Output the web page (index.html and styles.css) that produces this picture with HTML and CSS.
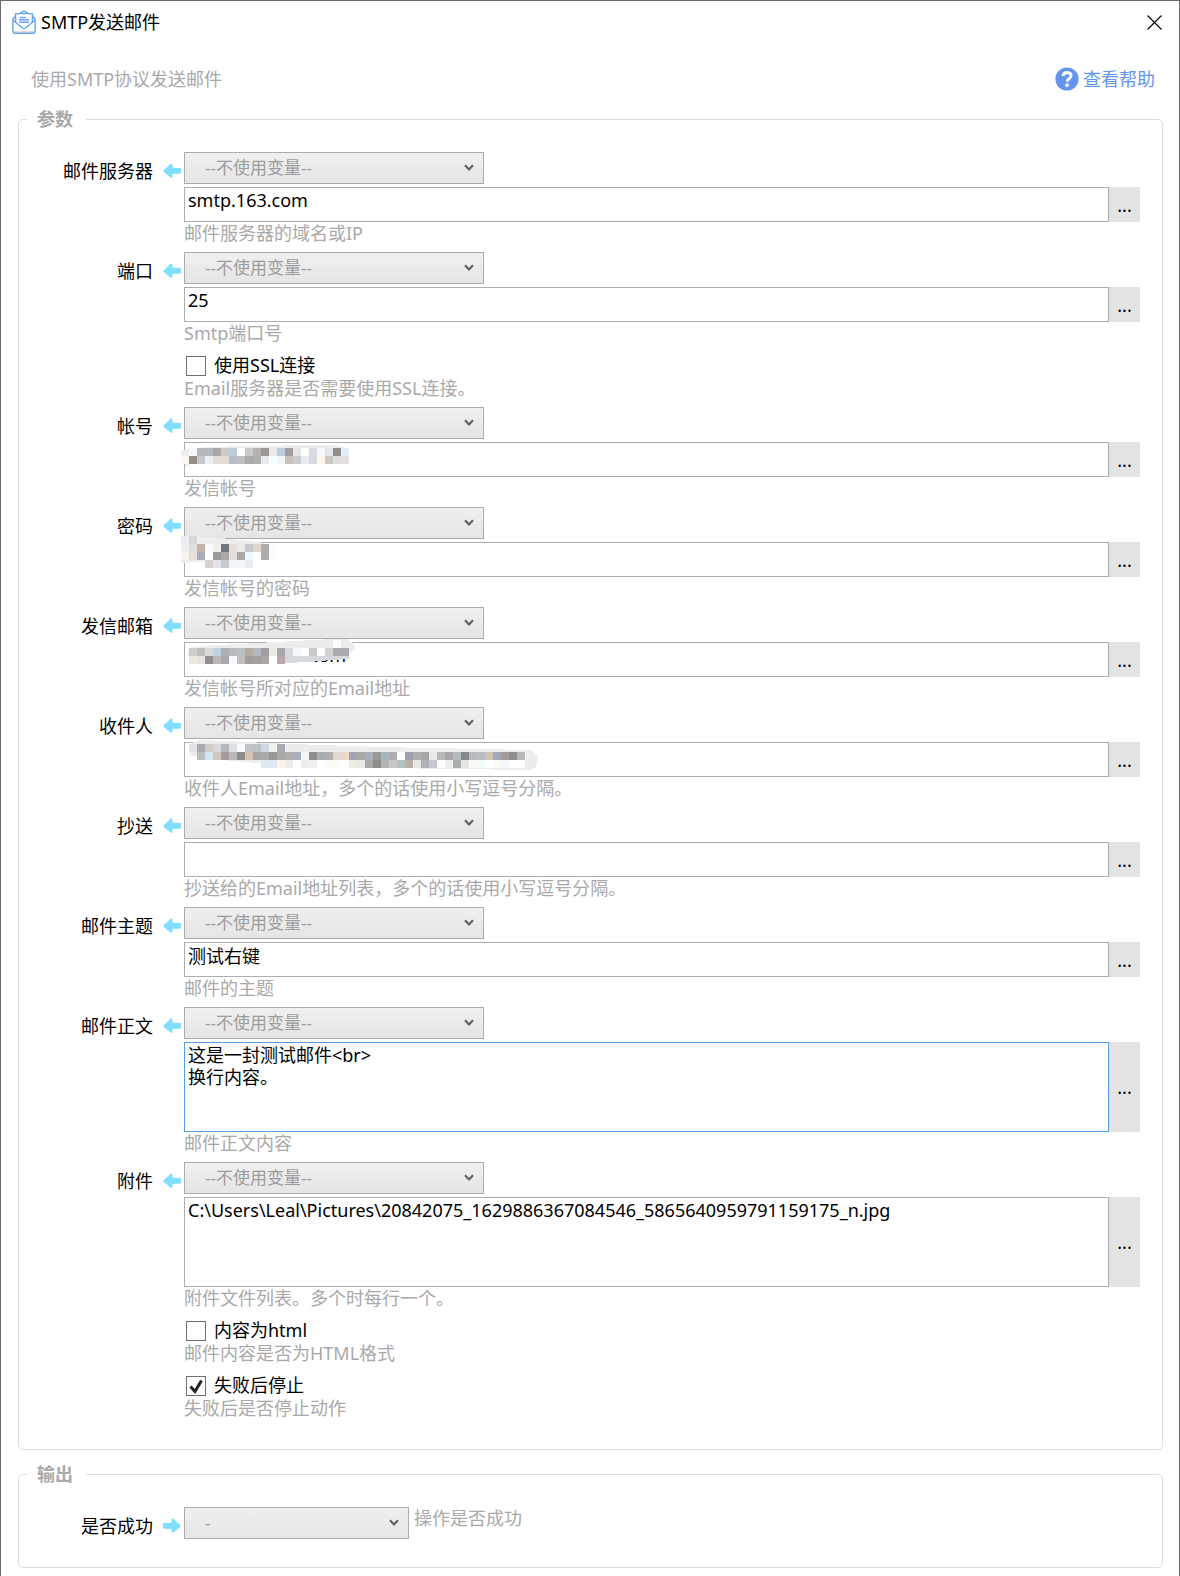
FILE: index.html
```html
<!DOCTYPE html>
<html lang="zh-CN">
<head>
    <meta charset="UTF-8">
    <meta name="viewport" content="width=device-width, initial-scale=1.0">
    <title>SMTP发送邮件</title>
    <link rel="stylesheet" href="styles.css">
</head>
<body>
    <svg class="symbols" aria-hidden="true">
        <symbol id="arrow-left" viewBox="0 0 18 16">
            <path d="M0.5 7.6 L7.6 0.8 Q9.4 0 9.4 1.6 V4.6 Q13 5.2 16.6 4.8 Q18 4.8 18 6.2 V9.6 Q18 11 16.6 10.8 Q13 10.4 9.4 11 V14 Q9.2 15.8 7.4 14.6 L0.5 8.8 Q-0.1 8.2 0.5 7.6 Z" fill="#80deff"/>
        </symbol>
    </svg>

    <div class="window">
        <header class="title-bar">
            <svg class="app-icon" viewBox="0 0 24 24" fill="none" stroke="#67a6ea" stroke-width="1.4" stroke-linejoin="round">
                <path d="M3.5 6.2 L0.9 9 V21.5 Q0.9 23.2 2.6 23.2 H21.4 Q23.1 23.2 23.1 21.5 V9 L20.5 6.2"/>
                <path d="M3.6 12.5 V3.6 H20.4 V12.5"/>
                <path d="M8 3.4 L12 0.9 L16 3.4"/>
                <path d="M1 10 L9.5 17.3 Q12 19.4 14.5 17.3 L23 10"/>
                <path d="M8 7.5 H14 M7 9.8 H17 M7 12.2 H17"/>
                <path d="M2 22 H22" stroke="#b0aebd" stroke-width="1"/>
            </svg>
            <h1>SMTP发送邮件</h1>
            <button class="close-btn" type="button" aria-label="关闭">
                <svg viewBox="0 0 15 15" stroke="#000" stroke-width="1.1"><path d="M0.5 0.5 L14.5 14.5 M14.5 0.5 L0.5 14.5"/></svg>
            </button>
        </header>

        <div class="intro">
            <p>使用SMTP协议发送邮件</p>
            <a class="help-link" href="#">
                <svg viewBox="0 0 24 24">
                    <circle cx="12" cy="12" r="11.6" fill="#6495ed"/>
                    <path d="M8 9.2 Q8.4 5.4 12.2 5.4 Q16 5.6 16 8.8 Q16 10.6 14 11.8 Q12.3 12.8 12.2 14.6" fill="none" stroke="#fff" stroke-width="3"/>
                    <circle cx="12.1" cy="18.2" r="1.9" fill="#fff"/>
                </svg>
                <span>查看帮助</span>
            </a>
        </div>

        <form>
            <fieldset class="params">
                <legend>参数</legend>

                <div class="row">
                    <label for="server">邮件服务器</label>
                    <svg class="arrow"><use href="#arrow-left"/></svg>
                    <div class="field">
                        <select aria-label="邮件服务器变量"><option>--不使用变量--</option></select>
                        <div class="text-box">
                            <input type="text" id="server" value="smtp.163.com">
                            <button type="button">...</button>
                        </div>
                        <p class="hint">邮件服务器的域名或IP</p>
                    </div>
                </div>

                <div class="row">
                    <label for="port">端口</label>
                    <svg class="arrow"><use href="#arrow-left"/></svg>
                    <div class="field">
                        <select aria-label="端口变量"><option>--不使用变量--</option></select>
                        <div class="text-box">
                            <input type="text" id="port" value="25">
                            <button type="button">...</button>
                        </div>
                        <p class="hint">Smtp端口号</p>
                    </div>
                </div>

                <div class="check-row">
                    <label><input type="checkbox">使用SSL连接</label>
                    <p class="hint">Email服务器是否需要使用SSL连接。</p>
                </div>

                <div class="row">
                    <label for="account">帐号</label>
                    <svg class="arrow"><use href="#arrow-left"/></svg>
                    <div class="field">
                        <select aria-label="帐号变量"><option>--不使用变量--</option></select>
                        <div class="text-box">
                            <input type="text" id="account">
                            <button type="button">...</button>
                            <svg class="mosaic" data-name="account"></svg>
                        </div>
                        <p class="hint">发信帐号</p>
                    </div>
                </div>

                <div class="row">
                    <label for="password">密码</label>
                    <svg class="arrow"><use href="#arrow-left"/></svg>
                    <div class="field">
                        <select aria-label="密码变量"><option>--不使用变量--</option></select>
                        <div class="text-box">
                            <input type="text" id="password">
                            <button type="button">...</button>
                            <svg class="mosaic" data-name="password"></svg>
                        </div>
                        <p class="hint">发信帐号的密码</p>
                    </div>
                </div>

                <div class="row">
                    <label for="sender">发信邮箱</label>
                    <svg class="arrow"><use href="#arrow-left"/></svg>
                    <div class="field">
                        <select aria-label="发信邮箱变量"><option>--不使用变量--</option></select>
                        <div class="text-box">
                            <input type="text" id="sender" class="masked" value=".com">
                            <button type="button">...</button>
                            <svg class="mosaic" data-name="sender"></svg>
                        </div>
                        <p class="hint">发信帐号所对应的Email地址</p>
                    </div>
                </div>

                <div class="row">
                    <label for="receiver">收件人</label>
                    <svg class="arrow"><use href="#arrow-left"/></svg>
                    <div class="field">
                        <select aria-label="收件人变量"><option>--不使用变量--</option></select>
                        <div class="text-box">
                            <input type="text" id="receiver">
                            <button type="button">...</button>
                            <svg class="mosaic" data-name="receiver"></svg>
                        </div>
                        <p class="hint">收件人Email地址，多个的话使用小写逗号分隔。</p>
                    </div>
                </div>

                <div class="row">
                    <label for="cc">抄送</label>
                    <svg class="arrow"><use href="#arrow-left"/></svg>
                    <div class="field">
                        <select aria-label="抄送变量"><option>--不使用变量--</option></select>
                        <div class="text-box">
                            <input type="text" id="cc">
                            <button type="button">...</button>
                        </div>
                        <p class="hint">抄送给的Email地址列表，多个的话使用小写逗号分隔。</p>
                    </div>
                </div>

                <div class="row">
                    <label for="subject">邮件主题</label>
                    <svg class="arrow"><use href="#arrow-left"/></svg>
                    <div class="field">
                        <select aria-label="邮件主题变量"><option>--不使用变量--</option></select>
                        <div class="text-box">
                            <input type="text" id="subject" value="测试右键">
                            <button type="button">...</button>
                        </div>
                        <p class="hint">邮件的主题</p>
                    </div>
                </div>

                <div class="row">
                    <label for="content">邮件正文</label>
                    <svg class="arrow"><use href="#arrow-left"/></svg>
                    <div class="field">
                        <select aria-label="邮件正文变量"><option>--不使用变量--</option></select>
                        <div class="text-box">
                            <textarea id="content" class="active">这是一封测试邮件&lt;br&gt;
换行内容。</textarea>
                            <button type="button">...</button>
                        </div>
                        <p class="hint">邮件正文内容</p>
                    </div>
                </div>

                <div class="row">
                    <label for="attachment">附件</label>
                    <svg class="arrow"><use href="#arrow-left"/></svg>
                    <div class="field">
                        <select aria-label="附件变量"><option>--不使用变量--</option></select>
                        <div class="text-box">
                            <textarea id="attachment">C:\Users\Leal\Pictures\20842075_1629886367084546_5865640959791159175_n.jpg</textarea>
                            <button type="button">...</button>
                        </div>
                        <p class="hint">附件文件列表。多个时每行一个。</p>
                    </div>
                </div>

                <div class="check-row">
                    <label><input type="checkbox">内容为html</label>
                    <p class="hint">邮件内容是否为HTML格式</p>
                </div>

                <div class="check-row">
                    <label><input type="checkbox" checked>失败后停止</label>
                    <p class="hint">失败后是否停止动作</p>
                </div>
            </fieldset>

            <fieldset class="output">
                <legend>输出</legend>
                <div class="row">
                    <label for="success">是否成功</label>
                    <svg class="arrow flip"><use href="#arrow-left"/></svg>
                    <div class="field inline">
                        <select id="success" class="short"><option>-</option></select>
                        <p class="hint">操作是否成功</p>
                    </div>
                </div>
            </fieldset>
        </form>
    </div>

    <script src="mosaic.js"></script>
</body>
</html>
```

FILE: styles.css
```css
* {
    margin: 0;
    padding: 0;
    box-sizing: border-box;
}

body {
    font-family: "Noto Sans", "Noto Sans CJK SC", sans-serif;
    font-size: 18px;
    line-height: 22px;
    color: #000;
    background-color: #fff;
}

input, select, textarea, button {
    font: inherit;
    color: inherit;
}

.symbols {
    display: none;
}

.window {
    min-height: 100vh;
    border: 1px solid #6b6b6b;
    border-bottom: none;
}

/* title bar */
.title-bar {
    display: flex;
    align-items: center;
    height: 42px;
    padding: 0 17px 0 11px;
}

.app-icon {
    width: 24px;
    height: 24px;
    margin-right: 5px;
}

h1 {
    flex: 1;
    font-size: 18px;
    font-weight: normal;
}

.close-btn {
    display: flex;
    border: none;
    background: none;
}

.close-btn svg {
    width: 15px;
    height: 15px;
}

.intro {
    display: flex;
    justify-content: space-between;
    align-items: center;
    padding: 24px 24px 16px 30px;
    color: #a9a9a9;
}

.help-link {
    display: flex;
    align-items: center;
    gap: 4px;
    color: #6495ed;
    text-decoration: none;
}

.help-link svg {
    width: 24px;
    height: 24px;
}

/* group boxes */
fieldset {
    margin: 0 16px 12px 17px;
    border: 1px solid #d5dfe5;
    border-radius: 5px;
}

.params {
    padding: 21px 22px 22px 0;
}

.output {
    padding: 21px 22px 28px 0;
}

legend {
    margin-left: 8px;
    padding: 0 13px 0 10px;
    line-height: 24px;
    font-weight: bold;
    color: #a9a9a9;
}

.row {
    display: grid;
    grid-template-columns: 144px 21px 1fr;
}

.row > label {
    padding: 8px 10px 0 0;
    text-align: right;
}

.arrow {
    width: 18px;
    height: 16px;
    margin-top: 11px;
}

.flip {
    transform: scaleX(-1);
}

.field.inline {
    display: flex;
    gap: 5px;
}

select {
    display: block;
    appearance: none;
    width: 300px;
    height: 32px;
    padding: 0 30px 0 20px;
    border: 1px solid #acacac;
    border-radius: 0;
    font-size: 17px;
    color: #9c9c9c;
    background: url("data:image/svg+xml,%3Csvg xmlns='http://www.w3.org/2000/svg' width='10' height='8'%3E%3Cpath d='M1 1.2L5 5.4L9 1.2' fill='none' stroke='%23606060' stroke-width='2.2'/%3E%3C/svg%3E") no-repeat right 9px top 11px, linear-gradient(#f0f0f0, #e5e5e5);
}

.short {
    width: 225px;
}

.text-box {
    display: flex;
    position: relative;
    margin-top: 3px;
}

.text-box input, textarea {
    flex: 1;
    min-width: 0;
    border: 1px solid #abadb3;
    background-color: #fff;
    outline: none;
}

.text-box input {
    height: 35px;
    padding: 0 3px 9px;
}

.text-box .masked {
    padding-left: 120px;
}

textarea {
    height: 90px;
    padding: 1px 3px;
    resize: none;
}

textarea.active {
    border-color: #569de5;
}

.text-box button {
    width: 31px;
    border: none;
    background-color: #e3e3e3;
}

.hint {
    height: 30px;
    color: #a9a9a9;
}

/* tick boxes */
.check-row {
    padding-left: 165px;
}

.check-row label {
    display: flex;
    align-items: center;
    gap: 8px;
    height: 25px;
    padding-left: 2px;
}

.check-row input {
    appearance: none;
    width: 20px;
    height: 20px;
    margin-top: 3px;
    border: 1px solid #707070;
    background-color: #fff;
}

.check-row input:checked {
    background: url("data:image/svg+xml,%3Csvg xmlns='http://www.w3.org/2000/svg' width='18' height='18'%3E%3Cpath d='M3.5 9.5L8 14.5L14.5 3.5' fill='none' stroke='%23212121' stroke-width='3'/%3E%3C/svg%3E") center no-repeat;
}

/* pixelated cover over private values */
.mosaic {
    position: absolute;
    left: -3px;
    top: -8px;
    width: 368px;
    height: 48px;
    pointer-events: none;
    shape-rendering: crispEdges;
}
```

FILE: mosaic.js
```js
// Rows of 8px cells, "-" leaves a cell empty
const mosaics = {
    account: {
        top: 14,
        shade: '8,14 60,12 150,11 166,14 168,18 8,18 8,33 3,30 0,22 0,17',
        rows: [
            '- f3f9fd b5b8b5 b5b8bf a8a7a6 cccac8 bccddb ffffff cbcac8 b8b2ac 9c9892 e8eaee bccde0 a39a9c e3e7ec fffffc d8dce0 f3f8fd e2e5ea 8f8c8d e3edf5',
            'fbf8ef 928f8c c5c9ce eeeeee e0dcda e6dcd6 b5bccd c0bebd a9abab b0afaf e6e9ee f6fcff f1f7f0 c6c1bf c8cbd0 eaebee d5dadf fdf8ea cac9c4 dedede e4dfdc'
        ]
    },
    password: {
        top: 2,
        shade: '0,2 30,3 84,9 88,14 88,24 0,29',
        rows: [
            'ebedf0 d5d7d9 - - - - - - - - -',
            'efefef dcdfe0 c6b5a6 fafcff f3f0eb 6f777c e5ded9 e9ebec c5c8cc dfd7cb acacad f9fdfc',
            'f8f4ec e4e0dd a9adb9 ffffff 9f9b9a a9a9aa e6dedb a8a8a8 eff7ff ffffff adadae fbfdfc',
            '- - - d5d1d0 dfe4ea cacaca f1f6f9 f4f7f9 e8edf2 ffffff'
        ]
    },
    sender: {
        top: 6,
        shade: '6,22 8,14 20,12 150,5 166,5 173,10 174,14 168,20 120,26 100,26 90,18',
        rows: [
            '- - - - - - - - - - - - - - - - - - - fafcfc',
            '- cfcdc9 bfbebb d5dadd c0d1e3 adb0b6 b5babd b9bec0 b3aaa4 b0b9bd a29d9f ebebe6 a9a8a8 d5dae0 f3f8fc ffffff cccac8 ffffff d5d1ce a9abb0 aaabaa',
            '- ece7e0 e4e3e0 8f8d8e bab6b3 a8aaae f8fafb c0bfbe a09c99 a29e9c a8a7a6 ffffff b9a9aa'
        ],
        extra: '104,22 168,22 168,25 150,26 128,28 104,29'
    },
    receiver: {
        top: 10,
        shade: '8,14 12,8 20,6 110,10 200,13 350,16 357,23 355,33 350,36 200,34 100,31 40,26 10,22',
        rows: [
            '- e5e5e5 a9abb0 cfcbc8 d8d8d8 b5b8bb e0e0e2 f5fcfd c0c4c5 bcc3c4 cdd8e0 f0f0f0 a9adb5',
            '- - bdbdbd d5e5f4 d3c8c0 a39b9c b8babb 8f8b88 d8c0b0 a8a5a5 aaa9ad 9a9793 a8a8a6 b0b0b0 a8b0bb f3f5f6 8e8c8d a9adb2 b0b0b0 e0dbd5 ecd8c4 a1a5ae a8a7a6 a9b0b9 9c9995 aab5bd b0aeac fbfeff 9aa3ab b0b0b0 a8a8a8 eaeaea b8b8b5 a5a7aa b5bcc0 828a90 bababa b8bec5 d3c3b3 a2a9bb a19b9a 8f8d8e b8b8b8',
            '- - - - - - - - - - e0e8f0 dfe9f5 f8f5e8 ececec ffffff eeeeee f0f0f2 ffffff fdfbf5 fdfbf5 ffffff efebe5 e8e8e8 a9a9a9 8f8c88 b5b5b5 c8c8ca b5c0c0 b8b0a8 e6e6e4 aeb1b9 c5c8cc ffffff eeeeee a8adb0 e5e5e5 fafaf3 f3fafa ffffff fbfbf3 f3f8f8 ffffff ffffff'
        ]
    }
};

function draw(tag, attrs, parent) {
    const el = document.createElementNS('http://www.w3.org/2000/svg', tag);
    for (const key in attrs) {
        el.setAttribute(key, attrs[key]);
    }
    parent.appendChild(el);
}

document.querySelectorAll('.mosaic').forEach(svg => {
    const mosaic = mosaics[svg.dataset.name];
    draw('polygon', { points: mosaic.shade, fill: '#ecedef' }, svg);
    if (mosaic.extra) {
        draw('polygon', { points: mosaic.extra, fill: '#d5d8dc' }, svg);
    }
    mosaic.rows.forEach((row, y) => {
        row.split(' ').forEach((color, x) => {
            if (color !== '-') {
                draw('rect', { x: x * 8, y: mosaic.top + y * 8, width: 8, height: 8, fill: '#' + color }, svg);
            }
        });
    });
});
```
